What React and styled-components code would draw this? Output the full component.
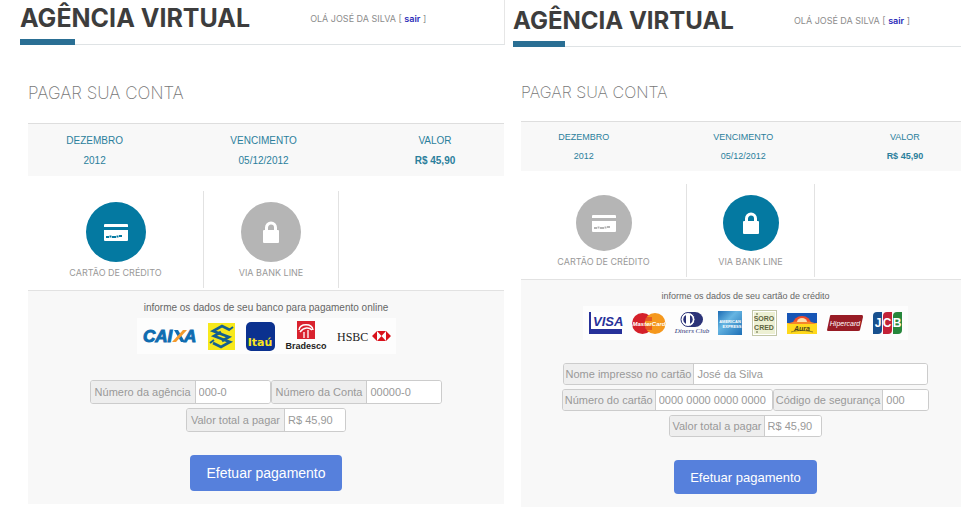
import { useState } from "react";
import styled, { createGlobalStyle, css, ThemeProvider } from "styled-components";

const GlobalStyle = createGlobalStyle`
  * {
    box-sizing: border-box;
  }
  body {
    margin: 0;
    background: #fff;
    font-family: "Liberation Sans", Arial, sans-serif;
    overflow-x: hidden;
  }
`;

const large = {
  indent: "20px",
  bodyIndent: "28px",
  overflow: "1px",
  title: "25px",
  titleLine: "36px",
  titlePad: "0px",
  user: "9px",
  accent: "55px",
  accentTop: "3px",
  heading: "17px",
  headingTop: "38px",
  headingBottom: "20px",
  row: "20px",
  table: "10px",
  tablePad: "6px",
  tabsTop: "15px",
  tabCard: "176px",
  tabBank: "135px",
  circle: "60px",
  tab: "9px",
  infoPad: "10px",
  message: "10px",
  logos: "36px",
  logoGap: "11px",
  logosBottom: "26px",
  field: "11px",
  fieldHeight: "24px",
  labelPad: "4px",
  button: "14px",
  buttonHeight: "36px",
  buttonWidth: "152px",
};

const small = {
  indent: "8px",
  bodyIndent: "16px",
  overflow: "-9px",
  title: "24px",
  titleLine: "36px",
  titlePad: "2px",
  user: "9px",
  accent: "52px",
  accentTop: "3px",
  heading: "16px",
  headingTop: "35px",
  headingBottom: "19px",
  row: "19px",
  table: "9px",
  tablePad: "5px",
  tabsTop: "13px",
  tabCard: "166px",
  tabBank: "128px",
  circle: "56px",
  tab: "9px",
  infoPad: "9px",
  message: "9px",
  logos: "34px",
  logoGap: "10px",
  logosBottom: "23px",
  field: "11px",
  fieldHeight: "22px",
  labelPad: "2px",
  button: "13px",
  buttonHeight: "34px",
  buttonWidth: "143px",
};

const Page = styled.main`
  display: grid;
  grid-template-columns: minmax(0, 505fr) minmax(0, 456fr);
`;

const Panel = styled.section`
  overflow: hidden;
`;

const Header = styled.header`
  margin-left: ${({ theme }) => theme.indent};
  padding-top: ${({ theme }) => theme.titlePad};
  border-bottom: 1px solid #dfe3e5;
  ${({ $divided }) =>
    $divided &&
    css`
      border-right: 1px solid #e6e6e6;
    `}
`;

const HeaderRow = styled.div`
  display: flex;
  align-items: center;
  gap: 60px;
  height: ${({ theme }) => theme.titleLine};
  white-space: nowrap;
`;

const Title = styled.h1`
  margin: 0;
  font-family: Inter, sans-serif;
  font-size: ${({ theme }) => theme.title};
  font-weight: 700;
  color: #3d3d3d;
`;

const User = styled.p`
  margin: 0;
  font-family: Inter, sans-serif;
  font-size: ${({ theme }) => theme.user};
  color: #8c8c8c;

  a {
    color: #2a2ab8;
    font-weight: 600;
    text-decoration: none;
  }
`;

const Accent = styled.div`
  width: ${({ theme }) => theme.accent};
  height: 6px;
  margin-top: ${({ theme }) => theme.accentTop};
  margin-bottom: -1px;
  background: #2a6f94;
`;

const Body = styled.div`
  padding-top: ${({ theme }) => theme.headingTop};
  margin-left: ${({ theme }) => theme.bodyIndent};
  margin-right: ${({ theme }) => theme.overflow};
`;

const Heading = styled.h2`
  margin: 0 0 ${({ theme }) => theme.headingBottom};
  font-family: Inter, sans-serif;
  font-size: ${({ theme }) => theme.heading};
  line-height: 20px;
  font-weight: 200;
  color: #777;
`;

const BillBox = styled.div`
  padding: ${({ theme }) => theme.tablePad} 0 6px;
  border-top: 1px solid #dedede;
  background: #f8f8f8;
`;

const Bill = styled.table`
  width: 100%;
  table-layout: fixed;
  border-collapse: collapse;
  text-align: center;
  font-size: ${({ theme }) => theme.table};
  color: #2b7f9c;

  th,
  td {
    height: ${({ theme }) => theme.row};
    padding: 0;
    font-weight: 400;
  }
  th:nth-child(1) {
    width: 28%;
  }
  th:nth-child(2) {
    width: 43%;
  }
  td:last-child {
    font-weight: 700;
  }
`;

const Tabs = styled.div`
  display: flex;
  margin-top: ${({ theme }) => theme.tabsTop};
  padding-bottom: 2px;
  border-bottom: 1px solid #e2e2e2;
`;

const Tab = styled.button`
  display: flex;
  flex-direction: column;
  align-items: center;
  gap: 5px;
  width: ${({ theme, $size }) => theme[$size]};
  padding: 11px 0 9px;
  border: 0;
  border-right: 1px solid #e2e2e2;
  background: none;
  font-family: Inter, sans-serif;
  font-size: ${({ theme }) => theme.tab};
  line-height: 12px;
  color: #999;
  cursor: pointer;
`;

const Circle = styled.span`
  display: flex;
  align-items: center;
  justify-content: center;
  width: ${({ theme }) => theme.circle};
  height: ${({ theme }) => theme.circle};
  border-radius: 50%;
  background: ${({ $active }) => ($active ? "#0479a1" : "#b5b5b5")};
  color: ${({ $active }) => ($active ? "#0479a1" : "#b5b5b5")};
`;

const Payment = styled.form`
  display: flex;
  flex-direction: column;
  align-items: center;
  padding: ${({ theme }) => theme.infoPad} 0 13px;
  background: #f8f8f8;
`;

const Message = styled.p`
  margin: 0;
  font-size: ${({ theme }) => theme.message};
  line-height: 14px;
  color: #666;
`;

const Logos = styled.div`
  display: flex;
  align-items: center;
  gap: ${({ theme }) => theme.logoGap};
  height: ${({ theme }) => theme.logos};
  margin: 3px 0 ${({ theme }) => theme.logosBottom};
  padding: 0 6px;
  background: #fdfdfd;

  svg {
    flex: none;
    overflow: visible;
  }
`;

const Fields = styled.div`
  display: flex;
  flex-direction: column;
  align-items: center;
  gap: 4px;
`;

const FieldRow = styled.div`
  display: flex;
  justify-content: center;
`;

const Field = styled.div`
  display: flex;
  height: ${({ theme }) => theme.fieldHeight};
  border: 1px solid #ccc;
  border-radius: 3px;
  overflow: hidden;
  font-size: ${({ theme }) => theme.field};

  label {
    display: flex;
    align-items: center;
    padding: 0 ${({ theme }) => theme.labelPad};
    border-right: 1px solid #ccc;
    background: #eee;
    color: #999;
    white-space: nowrap;
  }
  input {
    width: ${({ $width }) => $width}px;
    padding: 0 3px;
    border: 0;
    outline: 0;
    background: #fff;
    color: #999;
    font: inherit;
  }
`;

const Submit = styled.button`
  width: ${({ theme }) => theme.buttonWidth};
  height: ${({ theme }) => theme.buttonHeight};
  margin-top: 23px;
  padding: 0;
  border: 0;
  border-radius: 4px;
  background: #5680dc;
  color: #fff;
  font-family: inherit;
  font-size: ${({ theme }) => theme.button};
  cursor: pointer;
`;

const CardIcon = () => (
  <svg width="24" height="17" viewBox="0 0 24 17">
    <rect width="24" height="17" rx="1" fill="#fff" />
    <rect y="3" width="24" height="3" fill="currentColor" />
    <path d="M2 13h3m.5-.5h2m.5.5h4m.5-.5h2m.5-.5h3" stroke="currentColor" strokeWidth="2" />
  </svg>
);

const LockIcon = () => (
  <svg width="18" height="22" viewBox="0 0 18 22">
    <path d="M4.500 10V6.500a4.500 4.500 0 0 1 9 0V10" fill="none" stroke="#fff" strokeWidth="3" />
    <rect x="1" y="9" width="16" height="13" rx="1" fill="#fff" />
  </svg>
);

const Caixa = () => (
  <svg width="54" height="20" viewBox="0 0 54 20">
    <g fontFamily="Liberation Sans" fontWeight="700" fontStyle="italic" fontSize="17" fill="#0f6cb0" stroke="#0f6cb0">
      <text x="0" y="16">CAI</text>
      <text x="41" y="16">A</text>
    </g>
    <path d="M31 4h4l7 12h-4z" fill="#0f6cb0" />
    <path d="M29 16l11-12h4L33 16z" fill="#f39a2d" />
  </svg>
);

const BancoDoBrasil = () => (
  <svg width="27" height="27" viewBox="0 0 27 27">
    <rect width="27" height="27" fill="#f7e91c" />
    <g fill="none" stroke="#15608f" strokeWidth="2.600">
      <path d="M22 7l-8-4-9 5 16 6-7 4" />
      <path d="M5 20l8 4 9-5-16-6 7-4" />
      <path d="M2 20l4-3M21 7l4-3" strokeWidth="2" />
    </g>
  </svg>
);

const Itau = () => (
  <svg width="29" height="29" viewBox="0 0 29 29">
    <rect width="29" height="29" rx="5" fill="#0b318f" />
    <text x="14" y="24" textAnchor="middle" fontFamily="DejaVu Sans" fontWeight="700" fontSize="11" fill="#f9e51e">
      Itaú
    </text>
  </svg>
);

const Bradesco = () => (
  <svg width="40" height="30" viewBox="0 0 40 30">
    <rect x="11" width="18" height="18" fill="#d9222e" />
    <path d="M13 9c1-7 13-7 14 0" fill="none" stroke="#fff" strokeWidth="1.500" />
    <path d="M14 11c4-5 9-5 12-2" fill="none" stroke="#fff" strokeWidth="1.500" />
    <path d="M18 17v-6m4 6V9" stroke="#fff" strokeWidth="1.300" />
    <text x="20" y="28" textAnchor="middle" fontFamily="Liberation Sans" fontWeight="700" fontSize="9" fill="#222">
      Bradesco
    </text>
  </svg>
);

const Hsbc = () => (
  <svg width="53" height="16" viewBox="0 0 53 16">
    <text x="0" y="13" fontFamily="Liberation Serif" fontSize="12" fill="#222">
      HSBC
    </text>
    <path d="M35 8l5-5v10zM54 8l-5-5v10zM40 3h9l-4.500 5zM40 13h9l-4.500-5z" fill="#d9111b" />
  </svg>
);

const Visa = () => (
  <svg width="33" height="22" viewBox="0 0 33 22">
    <rect width="33" height="22" fill="#fff" />
    <path d="M0 0h2v17h31v5H0z" fill="#27319a" />
    <text x="4" y="14" fontFamily="Liberation Sans" fontWeight="700" fontStyle="italic" fontSize="13" fill="#27319a">
      VISA
    </text>
  </svg>
);

const MasterCard = () => (
  <svg width="34" height="21" viewBox="0 0 34 21">
    <circle cx="10.500" cy="10.500" r="10.500" fill="#d5202a" />
    <circle cx="23" cy="10.500" r="10.500" fill="#f5981d" />
    <path d="M14 5h6m-7 2h7m-7 7h7m-6 2h6" stroke="#d5202a" />
    <text x="17" y="13" textAnchor="middle" fontFamily="Liberation Sans" fontWeight="700" fontStyle="italic" fontSize="6" fill="#fff">
      MasterCard
    </text>
  </svg>
);

const Diners = () => (
  <svg width="32" height="22" viewBox="0 0 32 22">
    <path d="M13 0h6a8 7.500 0 0 1 0 15h-6z" fill="#2b3277" />
    <circle cx="12" cy="7.500" r="7" fill="#fff" stroke="#2b3277" />
    <path d="M10 3v9a5 5 0 0 1 0-9m4 0v9a5 5 0 0 0 0-9" fill="#2b3277" />
    <text x="16" y="21" textAnchor="middle" fontFamily="Liberation Serif" fontStyle="italic" fontSize="7" fill="#2b3277">
      Diners Club
    </text>
  </svg>
);

const Amex = () => (
  <svg width="24" height="24" viewBox="0 0 24 24">
    <defs>
      <linearGradient id="amex" x1="0" y1="0" x2="1" y2="1">
        <stop offset="0" stopColor="#1d6cb4" />
        <stop offset=".4" stopColor="#66b5e2" />
        <stop offset="1" stopColor="#1d6fb6" />
      </linearGradient>
    </defs>
    <rect width="24" height="24" fill="url(#amex)" />
    <g fontFamily="Liberation Sans" fontWeight="700" fill="#fff">
      <text x="12" y="12" textAnchor="middle" fontSize="4">AMERICAN</text>
      <text x="14" y="17" textAnchor="middle" fontSize="4">EXPRESS</text>
    </g>
  </svg>
);

const Sorocred = () => (
  <svg width="25" height="26" viewBox="0 0 25 26">
    <rect x=".5" y=".5" width="24" height="25" fill="#fff" stroke="#c3c7a8" />
    <rect x="2" y="2" width="21" height="22" fill="#edf0d3" />
    <g fontFamily="Liberation Sans" fontWeight="700" fontSize="7" fill="#5f6540" textAnchor="middle">
      <text x="12" y="11">SORO</text>
      <text x="12" y="20">CRED</text>
    </g>
    <path d="M5 3v2m0 16v2" stroke="#5f6540" />
  </svg>
);

const Aura = () => (
  <svg width="30" height="21" viewBox="0 0 30 21">
    <rect width="30" height="21" fill="#ffd91c" />
    <rect width="30" height="10" fill="#1755b5" />
    <path d="M6 11a9 8 0 0 1 18 0z" fill="#ef4a2a" />
    <path d="M0 11c8-4 22-4 30 0z" fill="#f6852a" />
    <path d="M10 9a5 4 0 0 1 10 0z" fill="#fbe0ae" />
    <text x="15" y="18" textAnchor="middle" fontFamily="Liberation Sans" fontWeight="700" fontStyle="italic" fontSize="7" fill="#4b4620">
      Aura
    </text>
    <path d="M4 19c7-2 14-2 22 0" fill="none" stroke="#4b4620" strokeWidth=".6" />
  </svg>
);

const Hipercard = () => (
  <svg width="36" height="18" viewBox="0 0 36 18">
    <path d="M4 1h31q1 0 1 2l-3 13q0 1-2 1H1q-1 0-1-1L3 2q0-1 1-1z" fill="#981c25" />
    <text x="18" y="12" textAnchor="middle" fontFamily="Liberation Sans" fontStyle="italic" fontSize="7" fill="#fff">
      Hipercard
    </text>
  </svg>
);

const Jcb = () => (
  <svg width="29" height="22" viewBox="0 0 29 22">
    <path d="M4 0h5v18q0 4-4 4H0V4q0-4 4-4z" fill="#17508e" />
    <path d="M14 0h5v18q0 4-4 4h-5V4q0-4 4-4z" fill="#c32238" />
    <path d="M24 0h5v18q0 4-4 4h-5V4q0-4 4-4z" fill="#27873c" />
    <g fontFamily="Liberation Sans" fontWeight="700" fontSize="12" fill="#fff" textAnchor="middle">
      <text x="5" y="15">J</text>
      <text x="14" y="15">C</text>
      <text x="24" y="15">B</text>
    </g>
  </svg>
);

function TextField({ id, label, value, width }) {
  return (
    <Field $width={width}>
      <label htmlFor={id}>{label}</label>
      <input id={id} type="text" defaultValue={value} />
    </Field>
  );
}

function Agencia({ theme, divided, initial, message, logos, children }) {
  const [active, setActive] = useState(initial);

  return (
    <ThemeProvider theme={theme}>
      <Panel>
        <Header $divided={divided}>
          <HeaderRow>
            <Title>AGÊNCIA VIRTUAL</Title>
            <User>
              OLÁ JOSÉ DA SILVA [ <a href="#sair">sair</a> ]
            </User>
          </HeaderRow>
          <Accent />
        </Header>
        <Body>
          <Heading>PAGAR SUA CONTA</Heading>
          <BillBox>
            <Bill>
              <thead>
                <tr>
                  <th>DEZEMBRO</th>
                  <th>VENCIMENTO</th>
                  <th>VALOR</th>
                </tr>
              </thead>
              <tbody>
                <tr>
                  <td>2012</td>
                  <td>05/12/2012</td>
                  <td>R$ 45,90</td>
                </tr>
              </tbody>
            </Bill>
          </BillBox>
          <Tabs>
            <Tab type="button" $size="tabCard" onClick={() => setActive("card")}>
              <Circle $active={active === "card"}>
                <CardIcon />
              </Circle>
              CARTÃO DE CRÉDITO
            </Tab>
            <Tab type="button" $size="tabBank" onClick={() => setActive("bank")}>
              <Circle $active={active === "bank"}>
                <LockIcon />
              </Circle>
              VIA BANK LINE
            </Tab>
          </Tabs>
          <Payment onSubmit={(e) => e.preventDefault()}>
            <Message>{message}</Message>
            <Logos>{logos}</Logos>
            <Fields>{children}</Fields>
            <Submit type="submit">Efetuar pagamento</Submit>
          </Payment>
        </Body>
      </Panel>
    </ThemeProvider>
  );
}

export default function App() {
  return (
    <>
      <GlobalStyle />
      <Page>
        <Agencia
          theme={large}
          divided
          initial="card"
          message="informe os dados de seu banco para pagamento online"
          logos={
            <>
              <Caixa />
              <BancoDoBrasil />
              <Itau />
              <Bradesco />
              <Hsbc />
            </>
          }
        >
          <FieldRow>
            <TextField id="agencia" label="Número da agência" value="000-0" width={74} />
            <TextField id="conta" label="Número da Conta" value="00000-0" width={74} />
          </FieldRow>
          <FieldRow>
            <TextField id="valor-banco" label="Valor total a pagar" value="R$ 45,90" width={60} />
          </FieldRow>
        </Agencia>
        <Agencia
          theme={small}
          initial="bank"
          message="informe os dados de seu cartão de crédito"
          logos={
            <>
              <Visa />
              <MasterCard />
              <Diners />
              <Amex />
              <Sorocred />
              <Aura />
              <Hipercard />
              <Jcb />
            </>
          }
        >
          <FieldRow>
            <TextField id="nome" label="Nome impresso no cartão" value="José da Silva" width={233} />
          </FieldRow>
          <FieldRow>
            <TextField id="cartao" label="Número do cartão" value="0000 0000 0000 0000" width={116} />
            <TextField id="codigo" label="Código de segurança" value="000" width={45} />
          </FieldRow>
          <FieldRow>
            <TextField id="valor-cartao" label="Valor total a pagar" value="R$ 45,90" width={56} />
          </FieldRow>
        </Agencia>
      </Page>
    </>
  );
}
